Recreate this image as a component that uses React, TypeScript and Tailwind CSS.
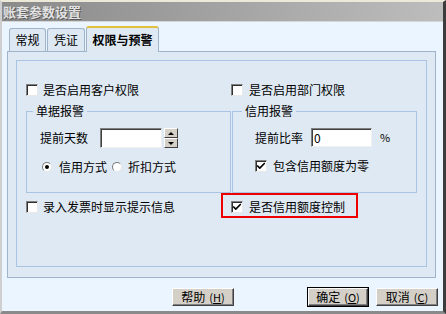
import { Check } from "lucide-react";

const font = "font-['Noto_Sans_CJK_SC','Noto_Sans',sans-serif]";

function CheckBox({ checked = false }: { checked?: boolean }) {
  return (
    <span className="flex h-3 w-3 shrink-0 items-center justify-center border border-t-[#808080] border-l-[#808080] border-r-[#e8e8e8] border-b-[#e8e8e8] bg-white shadow-[inset_1px_1px_0_#303030]">
      {checked && <Check className="h-[10px] w-[10px] text-black" strokeWidth={4} />}
    </span>
  );
}

function Radio({ checked = false }: { checked?: boolean }) {
  return (
    <span className="flex h-[10px] w-[10px] shrink-0 items-center justify-center rounded-full border border-t-[#7a7a7a] border-l-[#7a7a7a] border-r-[#e6e6e6] border-b-[#e6e6e6] bg-white">
      {checked && <span className="h-[4px] w-[4px] rounded-full bg-black" />}
    </span>
  );
}

function Button({ label, hot, primary = false }: { label: string; hot: string; primary?: boolean }) {
  return (
    <div className={`${primary ? "h-[20px] border border-black" : "h-[18px]"} w-[62px]`}>
      <div className="flex h-full w-full items-center justify-center border border-t-white border-l-white border-r-[#404040] border-b-[#404040] bg-[#d4d0c8] text-xs leading-none text-black shadow-[inset_-1px_-1px_0_#808080]">
        {label}
        <span className="ml-[4px] text-[11px]">
          (<span className="underline">{hot}</span>)
        </span>
      </div>
    </div>
  );
}

function Group({ title, legendLeft, children }: { title: string; legendLeft: string; children: React.ReactNode }) {
  return (
    <div className="relative h-[82px] border border-[#a9c3e2]">
      <span className={`absolute -top-[9px] ${legendLeft} bg-[#dfe9f3] px-[3px] text-xs leading-4 text-black`}>{title}</span>
      {children}
    </div>
  );
}

export default function App() {
  return (
    <div className={`${font} flex h-[314px] w-[446px] flex-col overflow-hidden border-t-2 border-l-2 border-r-[3px] border-b-[3px] border-t-[#ece9d8] border-l-[#cfcfcf] border-r-[#3c3c3c] border-b-[#8a8a8a] bg-[#ebf5ff]`}>
      {/* title bar */}
      <div className="flex h-[19px] shrink-0 items-center bg-gradient-to-r from-[#8a8a8a] to-[#bdbdbd] pl-[1px]">
        <span className="text-[13px] font-bold leading-none text-[#e2e2e2] [text-shadow:1px_1px_0_#5a5a5a]">账套参数设置</span>
      </div>
      <div className="h-px shrink-0 bg-[#d6d6d6]" />

      <div className="flex flex-1 flex-col pl-[5px]">
        {/* tabs */}
        <div className="mt-[4px] flex h-[25px] items-end pl-[2px] text-xs text-black">
          <div className="flex h-[23px] w-[37px] items-center justify-center rounded-t-[3px] border border-b-0 border-[#9fb3c9] bg-[#dde8f3]">常规</div>
          <div className="ml-px flex h-[23px] w-[38px] items-center justify-center rounded-t-[3px] border border-b-0 border-[#9fb3c9] bg-[#dde8f3]">凭证</div>
          <div className="relative z-10 -mb-px ml-px flex h-[26px] w-[73px] items-center justify-center rounded-t-[3px] border border-b-0 border-t-2 border-[#9fb3c9] border-t-[#e2bf3c] bg-[#dfe9f3] font-bold">
            权限与预警
          </div>
        </div>

        {/* panel */}
        <div className="h-[227px] w-[429px] border border-[#9fb3c9] bg-[#dfe9f3] pl-[8px] pt-[8px]">
          <div className="h-[207px] w-[411px] border border-[#a9c3e2] pl-[9px] pt-[21px] text-xs text-black">
            <div className="grid grid-cols-[205px_186px]">
              {/* left column */}
              <div className="flex flex-col">
                <label className="flex h-4 items-center gap-[5px]">
                  <CheckBox />
                  是否启用客户权限
                </label>
                <div className="mt-[13px]">
                  <Group title="单据报警" legendLeft="left-[6px]">
                    <div className="flex flex-col pl-[13px] pt-[16px]">
                      <div className="flex h-[20px] items-center">
                        <span>提前天数</span>
                        <div className="ml-[12px] h-[20px] w-[62px] border border-t-[#808080] border-l-[#808080] border-r-[#f0f0f0] border-b-[#f0f0f0] bg-white shadow-[inset_1px_1px_0_#404040]" />
                        <div className="ml-[2px] flex h-[20px] w-[14px] flex-col">
                          <div className="flex h-[10px] items-center justify-center border border-t-white border-l-white border-r-[#404040] border-b-[#404040] bg-[#d4d0c8]">
                            <span className="h-0 w-0 border-x-[3px] border-b-[3px] border-x-transparent border-b-black" />
                          </div>
                          <div className="flex h-[10px] items-center justify-center border border-t-white border-l-white border-r-[#404040] border-b-[#404040] bg-[#d4d0c8]">
                            <span className="h-0 w-0 border-x-[3px] border-t-[3px] border-x-transparent border-t-black" />
                          </div>
                        </div>
                      </div>
                      <div className="mt-[11px] flex h-4 items-center pl-[2px]">
                        <Radio checked />
                        <span className="ml-[7px]">信用方式</span>
                        <span className="ml-[5px]">
                          <Radio />
                        </span>
                        <span className="ml-[6px]">折扣方式</span>
                      </div>
                    </div>
                  </Group>
                </div>
                <label className="mt-[6px] flex h-4 items-center gap-[5px]">
                  <CheckBox />
                  录入发票时显示提示信息
                </label>
              </div>

              {/* right column */}
              <div className="flex flex-col">
                <label className="flex h-4 items-center gap-[6px]">
                  <CheckBox />
                  是否启用部门权限
                </label>
                <div className="ml-px mt-[13px]">
                  <Group title="信用报警" legendLeft="left-[9px]">
                    <div className="flex flex-col pl-[22px] pt-[16px]">
                      <div className="flex h-[19px] items-center">
                        <span>提前比率</span>
                        <div className="ml-[8px] flex h-[19px] w-[61px] items-center border border-t-[#808080] border-l-[#808080] border-r-[#f0f0f0] border-b-[#f0f0f0] bg-white pl-[2px] shadow-[inset_1px_1px_0_#404040]">
                          0
                        </div>
                        <span className="ml-[8px] text-[11px]">%</span>
                      </div>
                      <label className="mt-[11px] flex h-4 items-center gap-[6px]">
                        <CheckBox checked />
                        包含信用额度为零
                      </label>
                    </div>
                  </Group>
                </div>
                <div className="relative mt-[6px]">
                  <div className="absolute -left-[10px] -top-[6px] h-[25px] w-[137px] border-2 border-[#ee0000]" />
                  <label className="flex h-4 items-center gap-[6px]">
                    <CheckBox checked />
                    是否信用额度控制
                  </label>
                </div>
              </div>
            </div>
          </div>
        </div>

        {/* buttons */}
        <div className="mt-[10px] flex items-start pl-[165px]">
          <Button label="帮助" hot="H" />
          <div className="ml-[73px] -mt-px">
            <Button label="确定" hot="O" primary />
          </div>
          <div className="ml-[7px]">
            <Button label="取消" hot="C" />
          </div>
        </div>
      </div>
    </div>
  );
}
